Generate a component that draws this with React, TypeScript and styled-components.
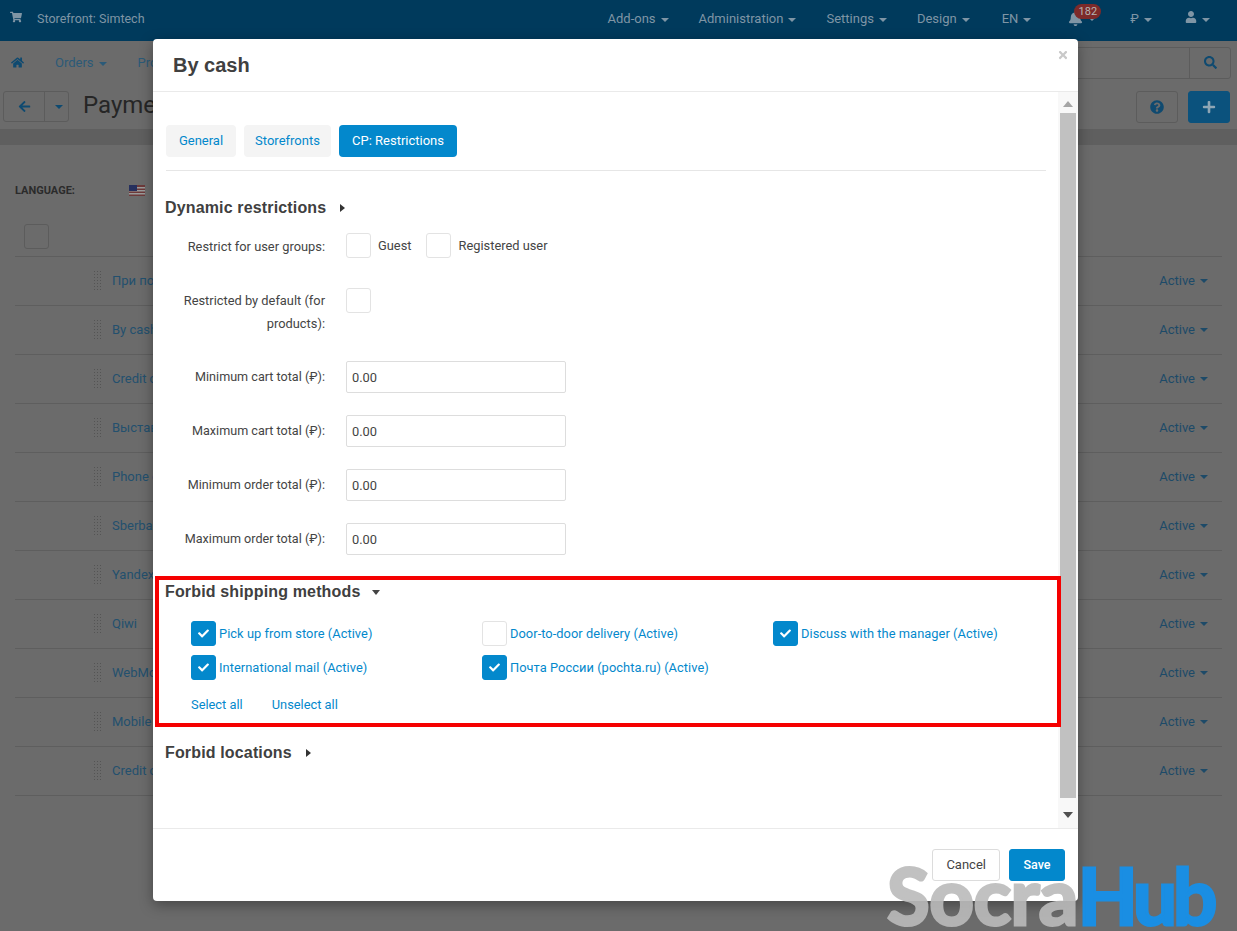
import React, { FC } from 'react';
import styled, { createGlobalStyle } from 'styled-components';
import {
    FaShoppingCart,
    FaHome,
    FaArrowLeft,
    FaSearch,
    FaQuestionCircle,
    FaPlus,
    FaBell,
    FaUser,
    FaCheck,
    FaTimes,
} from 'react-icons/fa';

const GlobalStyle = createGlobalStyle`
    html, body {
        margin: 0;
        padding: 0;
        height: 931px;
        overflow: hidden;
        background: #6b6b6b;
        font-family: Roboto, "Liberation Sans", sans-serif;
    }
    * { box-sizing: border-box; }
`;

const Page = styled.div`
    position: relative;
    width: 1237px;
    height: 931px;
    overflow: hidden;
    background: #6b6b6b;
`;

/* page behind the dialog, already dimmed */
const TopBar = styled.div`
    display: flex;
    align-items: center;
    justify-content: space-between;
    height: 41px;
    padding: 0 27px 4px 10px;
    background: #003a5c;
    color: #7f95a5;
    font-size: 13px;
`;

const Brand = styled.div`
    display: flex;
    align-items: center;
    gap: 15px;
    font-size: 12.5px;
    svg { font-size: 12px; margin-top: -4px; }
`;

const TopNav = styled.div`
    display: flex;
    align-items: center;
    gap: 30px;
    & > span:nth-child(5) { margin-left: 2px; }
`;

const Caret = styled.span<{ $color?: string }>`
    display: inline-block;
    margin-left: 5px;
    vertical-align: middle;
    border-top: 4px solid ${p => p.$color || 'currentColor'};
    border-left: 4px solid transparent;
    border-right: 4px solid transparent;
`;

const BellWrap = styled.div`
    position: relative;
    width: 39px;
    padding-left: 7px;
    font-size: 15px;
    display: flex;
    align-items: center;
`;

const Badge = styled.span`
    position: absolute;
    left: 13px;
    top: -7px;
    width: 27px;
    height: 15px;
    line-height: 15px;
    border-radius: 8px;
    background: #7d2a2a;
    color: #b5b5b5;
    font-size: 11px;
    text-align: center;
`;

const CurrencyItem = styled.span`
    margin-right: 3px;
`;

const SubNav = styled.div`
    display: flex;
    align-items: center;
    height: 43px;
    padding: 0 6px 0 11px;
    color: #2b5a78;
    font-size: 13px;
    gap: 31px;
`;

const SearchBox = styled.div`
    margin-left: auto;
    display: flex;
    width: 300px;
    height: 32px;
    border: 1px solid #5c5c5c;
    border-radius: 3px;
    justify-content: flex-end;
`;

const SearchButton = styled.div`
    width: 41px;
    display: flex;
    align-items: center;
    justify-content: center;
    border-left: 1px solid #5c5c5c;
    color: #0f4a70;
    font-size: 13px;
`;

const ActionBar = styled.div`
    display: flex;
    align-items: center;
    height: 45px;
    padding: 0 7px 0 3px;
`;

const BackGroup = styled.div`
    display: flex;
    height: 31px;
    border: 1px solid #5c5c5c;
    border-radius: 3px;
    color: #0f4a70;
`;

const BackCell = styled.div<{ $w: number }>`
    width: ${p => p.$w}px;
    display: flex;
    align-items: center;
    justify-content: center;
    font-size: 13px;
    & + & { border-left: 1px solid #5c5c5c; }
`;

const PageTitle = styled.div`
    margin: -3px 0 0 14px;
    font-size: 24px;
    color: #262626;
`;

const SquareButton = styled.div<{ $primary?: boolean }>`
    display: flex;
    align-items: center;
    justify-content: center;
    width: 42px;
    height: 32px;
    border-radius: 3px;
    border: 1px solid ${p => (p.$primary ? '#0b527d' : '#5c5c5c')};
    background: ${p => (p.$primary ? '#0b527d' : 'transparent')};
    color: ${p => (p.$primary ? '#8fa6b5' : '#0f4a70')};
    font-size: 14px;
    margin-left: ${p => (p.$primary ? '10px' : 'auto')};
`;

const Strip = styled.div`
    height: 16px;
    background: #5f5f5f;
`;

const Listing = styled.div`
    padding: 0 15px;
`;

const LanguageRow = styled.div`
    display: flex;
    align-items: center;
    height: 29px;
    margin-top: 31px;
    font-size: 11px;
    font-weight: 700;
    color: #2b2b2b;
    svg { margin-left: 54px; }
`;

const HeaderRow = styled.div`
    height: 52px;
    padding: 19px 0 0 9px;
    border-bottom: 1px solid #5e5e5e;
`;

const GhostBox = styled.div`
    width: 25px;
    height: 25px;
    border: 1px solid #5c5c5c;
    border-radius: 3px;
`;

const ListRow = styled.div`
    display: flex;
    align-items: center;
    height: 49px;
    padding: 0 14px 2px 78px;
    border-bottom: 1px solid #5e5e5e;
    color: #23506e;
    font-size: 13px;
`;

const DragDots = styled.div`
    width: 10px;
    height: 20px;
    margin-right: 9px;
    background-image: radial-gradient(#545454 1px, transparent 1px);
    background-size: 3px 3px;
`;

const RowStatus = styled.div`
    margin-left: auto;
    color: #1d4a68;
`;

/* dialog */
const Modal = styled.div`
    position: absolute;
    left: 153px;
    top: 39px;
    width: 925px;
    height: 862px;
    display: flex;
    flex-direction: column;
    background: #fff;
    border-radius: 4px;
    box-shadow: 0 4px 14px rgba(0, 0, 0, 0.35);
    color: #333;
`;

const ModalHeader = styled.div`
    position: relative;
    height: 53px;
    flex: none;
    display: flex;
    align-items: center;
    padding: 1px 20px 0;
    border-bottom: 1px solid #eaeaea;
`;

const ModalTitle = styled.h3`
    margin: 0;
    font-size: 20px;
    font-weight: 700;
    color: #404040;
    font-family: "Liberation Sans", sans-serif;
`;

const CloseIcon = styled.span`
    position: absolute;
    right: 9px;
    top: 10px;
    color: #c9c9c9;
    font-size: 12px;
`;

const ModalMain = styled.div`
    flex: 1;
    display: flex;
    min-height: 0;
`;

const Content = styled.div`
    flex: 1;
    min-width: 0;
    padding: 33px 12px 0 13px;
`;

const Tabs = styled.div`
    display: flex;
    gap: 8px;
    padding-bottom: 13px;
    border-bottom: 1px solid #e6e6e6;
`;

const Tab = styled.div<{ $active?: boolean; $w: number }>`
    width: ${p => p.$w}px;
    height: 32px;
    line-height: 32px;
    text-align: center;
    border-radius: 4px;
    font-size: 13px;
    background: ${p => (p.$active ? '#0388cc' : '#f4f4f4')};
    color: ${p => (p.$active ? '#fff' : '#0388cc')};
`;

const SectionTitle = styled.div<{ $top: number }>`
    display: flex;
    align-items: center;
    height: 20px;
    margin: ${p => p.$top}px 0 0 -1px;
    font-family: "Liberation Sans", sans-serif;
    font-size: 16px;
    font-weight: 700;
    letter-spacing: 0.15px;
    color: #404040;
`;

const ArrowRight = styled.span`
    margin-left: 14px;
    border-left: 5px solid #333;
    border-top: 4px solid transparent;
    border-bottom: 4px solid transparent;
`;

const ArrowDown = styled.span`
    margin-left: 12px;
    border-top: 5px solid #444;
    border-left: 4px solid transparent;
    border-right: 4px solid transparent;
`;

const Field = styled.div<{ $top: number }>`
    display: flex;
    align-items: flex-start;
    gap: 21px;
    margin-top: ${p => p.$top}px;
`;

const FieldLabel = styled.div<{ $pad?: number }>`
    width: 159px;
    flex: none;
    padding-top: ${p => p.$pad ?? 4}px;
    text-align: right;
    font-size: 12.85px;
    line-height: 23px;
    color: #444;
`;

const LimitLabel = styled(FieldLabel)`
    font-size: 12.6px;
`;

const Controls = styled.div`
    display: flex;
    align-items: center;
`;

const Check = styled.span<{ $on?: boolean }>`
    flex: none;
    display: flex;
    align-items: center;
    justify-content: center;
    width: 25px;
    height: 25px;
    border-radius: 3px;
    border: 1px solid ${p => (p.$on ? '#0388cc' : '#e3e3e3')};
    background: ${p => (p.$on ? '#0388cc' : '#fff')};
    color: #fff;
    font-size: 11px;
`;

const CheckCaption = styled.span`
    margin: 0 15px 0 7px;
    font-size: 12.85px;
    color: #444;
`;

const TextInput = styled.div`
    width: 220px;
    height: 32px;
    line-height: 31px;
    padding: 0 5px;
    border: 1px solid #ddd;
    border-radius: 2px;
    font-size: 12.85px;
    color: #444;
`;

const ForbidSection = styled.div`
    position: relative;
`;

const RedFrame = styled.div`
    position: absolute;
    left: -11px;
    right: -15px;
    top: -6px;
    height: 151px;
    border: 4px solid #f50000;
    pointer-events: none;
`;

const MethodGrid = styled.div`
    display: grid;
    grid-template-columns: repeat(3, 291px);
    row-gap: 9px;
    margin: 19px 0 0 25px;
`;

const Method = styled.div`
    display: flex;
    align-items: center;
    gap: 3px;
    height: 25px;
    font-size: 12.85px;
    letter-spacing: 0.05px;
    color: #0388cc;
`;

const LinkRow = styled.div`
    display: flex;
    gap: 29px;
    margin: 17px 0 0 25px;
    height: 16px;
    line-height: 16px;
    font-size: 12.85px;
    color: #0388cc;
`;

const ScrollTrack = styled.div`
    flex: none;
    width: 20px;
    display: flex;
    flex-direction: column;
    align-items: center;
    background: #f8f8f8;
`;

const ScrollEnd = styled.div`
    flex: none;
    height: 21px;
    width: 100%;
    padding-top: 2px;
    display: flex;
    align-items: center;
    justify-content: center;
`;

const ScrollEndBottom = styled(ScrollEnd)`
    height: 30px;
    padding-top: 4px;
`;

const ScrollUp = styled.span`
    border-bottom: 6px solid #a5a5a5;
    border-left: 5px solid transparent;
    border-right: 5px solid transparent;
`;

const ScrollDown = styled.span`
    border-top: 6px solid #505050;
    border-left: 5px solid transparent;
    border-right: 5px solid transparent;
`;

const ScrollThumb = styled.div`
    flex: 1;
    width: 16px;
    background: #c1c1c1;
`;

const ModalFooter = styled.div`
    height: 73px;
    flex: none;
    display: flex;
    justify-content: flex-end;
    gap: 9px;
    padding: 20px 13px 0 0;
    border-top: 1px solid #eaeaea;
`;

const FooterButton = styled.div<{ $primary?: boolean }>`
    height: 32px;
    line-height: 30px;
    padding: 0 ${p => (p.$primary ? '13.5px' : '13px')};
    border-radius: 3px;
    border: 1px solid ${p => (p.$primary ? '#0388cc' : '#dcdcdc')};
    background: ${p => (p.$primary ? '#0388cc' : '#fff')};
    color: ${p => (p.$primary ? '#fff' : '#444')};
    font-size: ${p => (p.$primary ? '12.5px' : '13px')};
    font-weight: ${p => (p.$primary ? 500 : 400)};
`;

const Watermark = styled.div`
    position: absolute;
    left: 887px;
    top: 860px;
    font-family: Lato, "DejaVu Sans", sans-serif;
    font-size: 78px;
    line-height: 70px;
    font-weight: 700;
    letter-spacing: -0.5px;
    white-space: nowrap;
    pointer-events: none;
    -webkit-text-stroke: 3px currentColor;
`;

const WatermarkGrey = styled.span`
    color: #bbb;
    opacity: 0.9;
`;

const WatermarkBlue = styled.span`
    color: #1a8ee3;
    letter-spacing: -4px;
`;

const topItems = ['Add-ons', 'Administration', 'Settings', 'Design', 'EN'];
const rows = [
    'При получении',
    'By cash',
    'Credit card',
    'Выставить счёт',
    'Phone ordering',
    'Sberbank',
    'Yandex.Kassa',
    'Qiwi',
    'WebMoney',
    'Mobile',
    'Credit card',
];
const limits = [
    'Minimum cart total (₽):',
    'Maximum cart total (₽):',
    'Minimum order total (₽):',
    'Maximum order total (₽):',
];
const methods = [
    { name: 'Pick up from store (Active)', on: true },
    { name: 'Door-to-door delivery (Active)', on: false },
    { name: 'Discuss with the manager (Active)', on: true },
    { name: 'International mail (Active)', on: true },
    { name: 'Почта России (pochta.ru) (Active)', on: true },
];

const Flag: FC = () => (
    <svg width="16" height="11" viewBox="0 0 16 11">
        <rect width="16" height="11" fill="#6d3a3a" />
        <rect y="2" width="16" height="1.5" fill="#9a9a9a" />
        <rect y="5" width="16" height="1.5" fill="#9a9a9a" />
        <rect y="8" width="16" height="1.5" fill="#9a9a9a" />
        <rect width="8" height="6" fill="#26305e" />
    </svg>
);

const BackgroundPage: FC = () => (
    <>
        <TopBar>
            <Brand><FaShoppingCart /> Storefront: Simtech</Brand>
            <TopNav>
                {topItems.map(item => (
                    <span key={item}>{item}<Caret /></span>
                ))}
                <BellWrap><FaBell /><Caret /><Badge>182</Badge></BellWrap>
                <CurrencyItem>₽<Caret /></CurrencyItem>
                <span><FaUser size={12} /><Caret /></span>
            </TopNav>
        </TopBar>
        <SubNav>
            <FaHome size={13} color="#0f4a70" />
            <span>Orders<Caret /></span>
            <span>Products<Caret /></span>
            <SearchBox><SearchButton><FaSearch /></SearchButton></SearchBox>
        </SubNav>
        <ActionBar>
            <BackGroup>
                <BackCell $w={40}><FaArrowLeft /></BackCell>
                <BackCell $w={24}><Caret /></BackCell>
            </BackGroup>
            <PageTitle>Payment methods</PageTitle>
            <SquareButton><FaQuestionCircle /></SquareButton>
            <SquareButton $primary><FaPlus /></SquareButton>
        </ActionBar>
        <Strip />
        <Listing>
            <LanguageRow>LANGUAGE: <Flag /></LanguageRow>
            <HeaderRow><GhostBox /></HeaderRow>
            {rows.map((name, i) => (
                <ListRow key={i}>
                    <DragDots />
                    {name}
                    <RowStatus>Active<Caret /></RowStatus>
                </ListRow>
            ))}
        </Listing>
    </>
);

const App: FC = () => (
    <Page>
        <GlobalStyle />
        <BackgroundPage />
        <Modal>
            <ModalHeader>
                <ModalTitle>By cash</ModalTitle>
                <CloseIcon><FaTimes /></CloseIcon>
            </ModalHeader>
            <ModalMain>
                <Content>
                    <Tabs>
                        <Tab $w={70}>General</Tab>
                        <Tab $w={87}>Storefronts</Tab>
                        <Tab $w={118} $active>CP: Restrictions</Tab>
                    </Tabs>
                    <SectionTitle $top={27}>Dynamic restrictions<ArrowRight /></SectionTitle>
                    <Field $top={15}>
                        <FieldLabel $pad={2}>Restrict for user groups:</FieldLabel>
                        <Controls>
                            <Check />
                            <CheckCaption>Guest</CheckCaption>
                            <Check />
                            <CheckCaption>Registered user</CheckCaption>
                        </Controls>
                    </Field>
                    <Field $top={30}>
                        <FieldLabel $pad={1}>Restricted by default (for products):</FieldLabel>
                        <Controls><Check /></Controls>
                    </Field>
                    {limits.map((label, i) => (
                        <Field key={label} $top={i === 0 ? 26 : 22}>
                            <LimitLabel>{label}</LimitLabel>
                            <TextInput>0.00</TextInput>
                        </Field>
                    ))}
                    <ForbidSection>
                        <SectionTitle $top={27}>Forbid shipping methods<ArrowDown /></SectionTitle>
                        <MethodGrid>
                            {methods.map(m => (
                                <Method key={m.name}>
                                    <Check $on={m.on}>{m.on && <FaCheck />}</Check>
                                    {m.name}
                                </Method>
                            ))}
                        </MethodGrid>
                        <LinkRow>
                            <span>Select all</span>
                            <span>Unselect all</span>
                        </LinkRow>
                        <RedFrame />
                    </ForbidSection>
                    <SectionTitle $top={30}>Forbid locations<ArrowRight /></SectionTitle>
                </Content>
                <ScrollTrack>
                    <ScrollEnd><ScrollUp /></ScrollEnd>
                    <ScrollThumb />
                    <ScrollEndBottom><ScrollDown /></ScrollEndBottom>
                </ScrollTrack>
            </ModalMain>
            <ModalFooter>
                <FooterButton>Cancel</FooterButton>
                <FooterButton $primary>Save</FooterButton>
            </ModalFooter>
        </Modal>
        <Watermark>
            <WatermarkGrey>Socra</WatermarkGrey><WatermarkBlue>Hub</WatermarkBlue>
        </Watermark>
    </Page>
);

export default App;
